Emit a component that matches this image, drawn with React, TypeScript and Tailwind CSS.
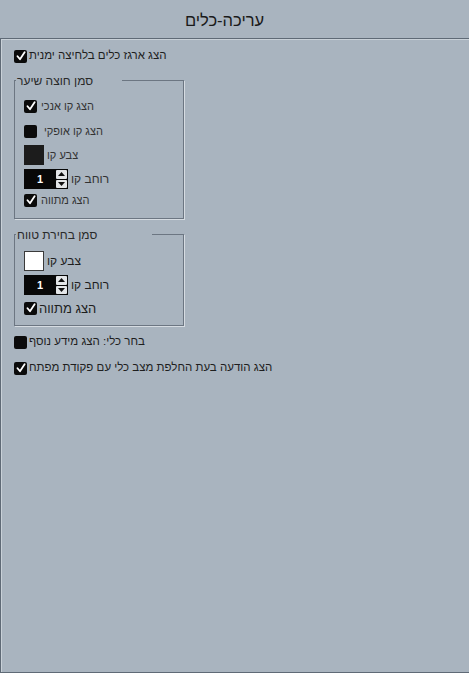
import React from 'react'

const font = { fontFamily: '"Liberation Sans", "DejaVu Sans", sans-serif' }

function Check({ checked }: { checked: boolean }) {
  return (
    <span className="flex h-[13px] w-[13px] shrink-0 items-center justify-center rounded-[2px] bg-[#0b0b0b]">
      {checked && (
        <svg width="10" height="10" viewBox="0 0 10 10">
          <path d="M1.5 5.2 L4 8.3 L8.6 1.2" fill="none" stroke="white" strokeWidth="1.8" strokeLinecap="round" strokeLinejoin="round" />
        </svg>
      )}
    </span>
  )
}

function CheckRow({ label, checked, className = '', textClass = '' }: { label: string; checked: boolean; className?: string; textClass?: string }) {
  return (
    <div className={`flex items-center ${className}`}>
      <Check checked={checked} />
      <span className={`ml-[2px] leading-none ${textClass}`}>{label}</span>
    </div>
  )
}

function Swatch({ color }: { color: string }) {
  return <span className={`block h-[20px] w-[20px] shrink-0 border border-[#3a3a3a] ${color}`} />
}

function Spin() {
  return (
    <span className="flex h-[20px] w-[44px] shrink-0 items-center bg-[#080808] pr-[1px]">
      <span className="flex-1 text-center text-[11px] font-bold leading-none text-white">1</span>
      <span className="flex h-[18px] w-[11px] flex-col gap-[1px]">
        <span className="flex flex-1 items-center justify-center rounded-[1px] bg-[#e4e6e8]">
          <svg width="7" height="4" viewBox="0 0 7 4"><path d="M0 4 L3.5 0 L7 4Z" fill="#111" /></svg>
        </span>
        <span className="flex flex-1 items-center justify-center rounded-[1px] bg-[#e4e6e8]">
          <svg width="7" height="4" viewBox="0 0 7 4"><path d="M0 0 L3.5 4 L7 0Z" fill="#111" /></svg>
        </span>
      </span>
    </span>
  )
}

function Group({ title, titleWidth, children, className = '' }: { title: string; titleWidth: string; children: React.ReactNode; className?: string }) {
  return (
    <div className={`relative w-[170px] border border-[#6c7682] shadow-[1px_1px_0_#d6dce2] ${className}`}>
      <span className={`absolute -top-[7px] left-[1px] bg-[#a9b4bf] pl-[1px] text-[12px] leading-[15px] text-[#2a2a2a] ${titleWidth}`}>
        {title}
      </span>
      {children}
    </div>
  )
}

export default function App() {
  return (
    <div className="flex h-[673px] w-[469px] flex-col bg-[#a9b4bf] text-[#1e1e1e]" style={font}>
      <div className="flex h-[38px] items-center justify-center pr-[20px] pt-[2px] text-[16.5px] text-[#1a1a1a]">
        עריכה-כלים
      </div>
      <div className="flex-1 border-b border-l border-t border-[#5f6a76] pl-[13px] shadow-[inset_1px_1px_0_#c9d1d8]">
        <CheckRow label="הצג ארגז כלים בלחיצה ימנית" checked className="mt-[10px] h-[14px] text-[11.5px]" />

        <Group title="סמן חוצה שיער" titleWidth="w-[106px]" className="mt-[17px]">
          <div className="flex flex-col pb-[8px] pl-[9px] pt-[15px] text-[11px] text-[#333]">
            <CheckRow label="הצג קו אנכי" checked className="h-[20px]" textClass="ml-[4px]" />
            <CheckRow label="הצג קו אופקי" checked={false} className="mt-[5px] h-[20px]" textClass="ml-[7px]" />
            <div className="mt-[4px] flex h-[20px] items-center">
              <span className="block h-[20px] w-[20px] shrink-0 bg-[#1c1c1c]" />
              <span className="ml-[3px] leading-none">צבע קו</span>
            </div>
            <div className="mt-[4px] flex h-[20px] items-center">
              <Spin />
              <span className="ml-[3px] text-[12px] leading-none">רוחב קו</span>
            </div>
            <CheckRow label="הצג מתווה" checked className="mt-[1px] h-[20px]" textClass="ml-[4px]" />
          </div>
        </Group>

        <Group title="סמן בחירת טווח" titleWidth="w-[136px]" className="mt-[15px]">
          <div className="flex flex-col pb-[7px] pl-[9px] pt-[16px] text-[12px] text-[#1e1e1e]">
            <div className="flex h-[20px] items-center">
              <Swatch color="bg-white" />
              <span className="ml-[3px] leading-none">צבע קו</span>
            </div>
            <div className="mt-[4px] flex h-[20px] items-center">
              <Spin />
              <span className="ml-[3px] leading-none">רוחב קו</span>
            </div>
            <CheckRow label="הצג מתווה" checked className="mt-[3px] h-[20px] text-[13px]" />
          </div>
        </Group>

        <CheckRow label="בחר כלי: הצג מידע נוסף" checked={false} className="mt-[9px] h-[14px] text-[11.5px]" />
        <CheckRow label="הצג הודעה בעת החלפת מצב כלי עם פקודת מפתח" checked className="mt-[12px] h-[14px] text-[11.5px]" />
      </div>
    </div>
  )
}
